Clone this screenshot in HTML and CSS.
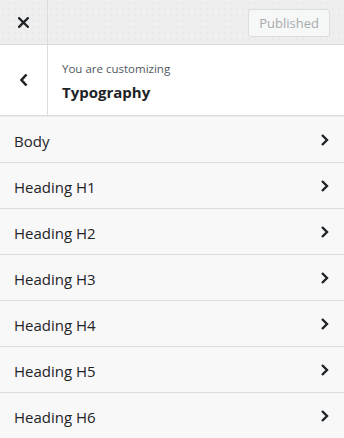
FILE: index.html
```html
<!DOCTYPE html>
<html>
<head>
<meta charset="utf-8">
<link rel="stylesheet" href="styles.css">
</head>
<body>
<div class="panel">
  <header class="topbar">
    <button class="close" aria-label="Close">
      <svg width="11" height="11" viewBox="0 0 11 11"><path d="M1.2 1.2 L9.8 9.8 M9.8 1.2 L1.2 9.8" stroke="#1d2327" stroke-width="2.3" stroke-linecap="square"/></svg>
    </button>
    <div class="topbar-main">
      <button class="published">Published</button>
    </div>
  </header>
  <div class="section-head">
    <button class="back" aria-label="Back">
      <svg width="10" height="14" viewBox="0 0 10 14"><path d="M7.5 1.5 L2.5 7 L7.5 12.5" fill="none" stroke="#1d2327" stroke-width="2.6"/></svg>
    </button>
    <div class="titles">
      <span class="action">You are customizing</span>
      <h3 class="title">Typography</h3>
    </div>
  </div>
  <ul class="list">
    <li class="item"><span>Body</span><svg class="chev" width="9" height="12" viewBox="0 0 9 12"><path d="M2 1 L7 6 L2 11" fill="none" stroke="#1d2327" stroke-width="2.4"/></svg></li>
    <li class="item"><span>Heading H1</span><svg class="chev" width="9" height="12" viewBox="0 0 9 12"><path d="M2 1 L7 6 L2 11" fill="none" stroke="#1d2327" stroke-width="2.4"/></svg></li>
    <li class="item"><span>Heading H2</span><svg class="chev" width="9" height="12" viewBox="0 0 9 12"><path d="M2 1 L7 6 L2 11" fill="none" stroke="#1d2327" stroke-width="2.4"/></svg></li>
    <li class="item"><span>Heading H3</span><svg class="chev" width="9" height="12" viewBox="0 0 9 12"><path d="M2 1 L7 6 L2 11" fill="none" stroke="#1d2327" stroke-width="2.4"/></svg></li>
    <li class="item"><span>Heading H4</span><svg class="chev" width="9" height="12" viewBox="0 0 9 12"><path d="M2 1 L7 6 L2 11" fill="none" stroke="#1d2327" stroke-width="2.4"/></svg></li>
    <li class="item"><span>Heading H5</span><svg class="chev" width="9" height="12" viewBox="0 0 9 12"><path d="M2 1 L7 6 L2 11" fill="none" stroke="#1d2327" stroke-width="2.4"/></svg></li>
    <li class="item"><span>Heading H6</span><svg class="chev" width="9" height="12" viewBox="0 0 9 12"><path d="M2 1 L7 6 L2 11" fill="none" stroke="#1d2327" stroke-width="2.4"/></svg></li>
  </ul>
</div>
</body>
</html>
```

FILE: styles.css
```css
* { box-sizing: border-box; }
html, body { margin: 0; padding: 0; }
body {
  width: 344px;
  height: 438px;
  overflow: hidden;
  background: #f7f7f7;
  font-family: "Open Sans", "Noto Sans", sans-serif;
  color: #1d2327;
}
button { font-family: inherit; }
.panel { display: flex; flex-direction: column; }
.topbar {
  display: flex;
  height: 45px;
  background-color: #eeeeee;
  background-image: radial-gradient(#e2e2e2 0.6px, transparent 0.8px);
  background-size: 6px 6px;
  border-bottom: 1px solid #dcdcde;
}
.close {
  width: 48px;
  height: 44px;
  border: 0;
  border-right: 1px solid #dcdcde;
  background: transparent;
  display: flex;
  align-items: center;
  justify-content: center;
  padding: 0;
}
.topbar-main {
  flex: 1;
  display: flex;
  justify-content: flex-end;
  align-items: center;
  padding-right: 14px;
}
.published {
  height: 28px;
  padding: 0 10px;
  margin-top: 2px;
  font-size: 13px;
  color: #a7aaad;
  background: #f6f7f7;
  border: 1px solid #dcdcde;
  border-radius: 3px;
}
.section-head {
  display: flex;
  height: 71px;
  background: #fff;
  border-bottom: 1px solid #dcdcde;
  box-shadow: 0 1px 0 #ececec;
}
.back {
  width: 48px;
  border: 0;
  border-right: 1px solid #dcdcde;
  background: transparent;
  display: flex;
  align-items: center;
  justify-content: center;
  padding: 0;
}
.titles {
  display: flex;
  flex-direction: column;
  padding: 15px 0 0 14px;
}
.action {
  font-size: 11.5px;
  color: #50575e;
  line-height: 18px;
}
.title {
  margin: 3px 0 0;
  font-size: 15px;
  font-weight: 700;
  line-height: 22px;
  color: #1d2327;
}
.list {
  list-style: none;
  margin: 1px 0 0;
  padding: 0;
}
.item {
  display: flex;
  align-items: center;
  justify-content: space-between;
  height: 46px;
  padding: 2px 15px 0 14px;
  border-bottom: 1px solid #dcdcde;
  background: #f8f8f8;
  font-size: 15px;
  color: #1d2327;
}
.chev { display: block; margin-top: -2px; }
```
